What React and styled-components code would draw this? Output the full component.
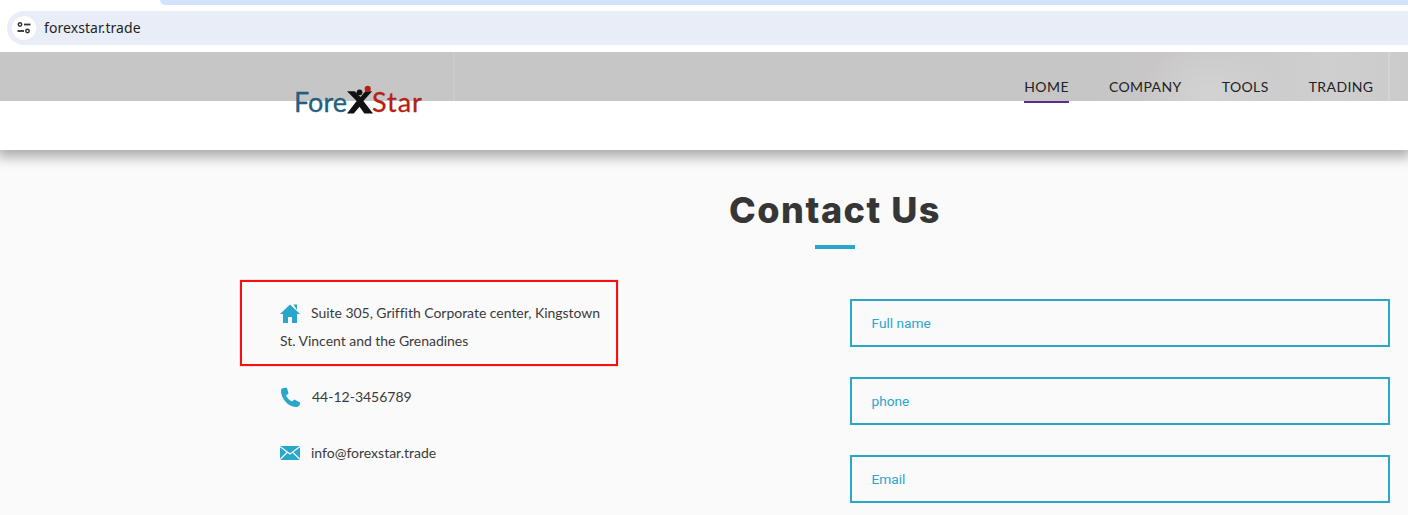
import React from "react";
import styled, { createGlobalStyle } from "styled-components";

const Global = createGlobalStyle`
  html, body { margin: 0; padding: 0; height: 515px; overflow: hidden; background: #fafafa; }
  * { box-sizing: border-box; }
`;
const Page = styled.div`width: 1408px; height: 515px; overflow: hidden; background: #fafafa; font-family: "Lato", sans-serif;`;
const Chrome = styled.div`position: relative; z-index: 1; height: 52px; background: #fff; display: flex; flex-direction: column;`;
const TabStrip = styled.div`height: 5px; margin-left: 160px; background: #d3e3fd; border-bottom-left-radius: 8px;`;
const AddressBar = styled.div`
  height: 34px; margin: 6px 0 0 7px; padding-left: 5px; display: flex; align-items: center; gap: 8px;
  background: #e9edf7; border-radius: 17px 0 0 17px;
`;
const SiteBadge = styled.span`
  width: 24px; height: 24px; border-radius: 50%; background: #fff;
  display: flex; align-items: center; justify-content: center;
`;
const Url = styled.span`font: 14px "Noto Sans", sans-serif; color: #1f1f1f; letter-spacing: .07px; margin-top: -1px;`;

const Header = styled.header`
  position: relative; height: 98px; display: flex; align-items: flex-start; padding: 25px 34.5px 0 295px;
  box-shadow: 0 4px 12px 3px rgba(0,0,0,.32);
  background:
    linear-gradient(#fff, #fff) 0 49px / 100% 49px no-repeat,
    linear-gradient(90deg, transparent 453px, #cbcbcb 453px, #cbcbcb 455px, transparent 455px, transparent 1388px, #d4d4d4 1388px, #d4d4d4 1390px, transparent 1390px),
    radial-gradient(ellipse 70px 50px at 1210px 40px, #d4d3d3, transparent),
    linear-gradient(90deg, #c6c6c6 0, #c6c6c6 1020px, #c8c6c6 1150px, #cfcfcf 1330px, #cbcbcb 1408px);
`;
const Logo = styled.div`
  margin-top: 8px; height: 30px; display: flex; align-items: flex-end;
  font: 400 27px/26px "Lato", sans-serif;
  -webkit-text-stroke: .3px currentColor;
`;
const LogoFore = styled.span`color: #22607f; margin-left: -1px;`;
const LogoStar = styled.span`color: #b51f14; letter-spacing: 1px;`;
const LogoMark = styled.svg`width: 27px; height: 30px; margin-right: -2px; flex: none;`;
const Nav = styled.nav`margin-left: auto; display: flex; gap: 40px;`;
const NavLink = styled.a`
  display: block; height: 26px; padding-bottom: 4px;
  font: 400 14px/20px "Lato", sans-serif; letter-spacing: .4px; color: #222;
  border-bottom: 2px solid ${p => (p.$active ? "#5b2d8e" : "transparent")};
`;

const Main = styled.main`width: 1190px; margin-left: 240px;`;
const Title = styled.h1`
  margin: 0; padding-top: 38px; height: 95px; text-align: center;
  font: 800 36px/44px "Inter", sans-serif; letter-spacing: 1.5px; color: #363636;
`;
const Rule = styled.div`width: 40px; height: 4px; margin: 0 auto; background: #2ba6cb;`;
const Columns = styled.div`display: grid; grid-template-columns: 378px 540px; column-gap: 232px; margin-top: 31px;`;
const Info = styled.div`display: flex; flex-direction: column; font-size: 14px; line-height: 28px; color: #3a3a3a;`;
const Highlight = styled.div`
  border: 2px solid #f80f0f; box-shadow: 0 0 1px rgba(255,0,0,.6);
  padding: 17px 0 9px 38px; margin-bottom: 17px; letter-spacing: -.03px;
`;
const InfoRow = styled.div`padding-left: 40px; margin-bottom: 28px; display: flex; align-items: center;`;
const HouseIcon = styled.svg`width: 20px; height: 20px; vertical-align: -5px; margin-right: 11px;`;
const RowIcon = styled.svg`width: 21px; height: ${p => p.$h}px; margin-right: ${p => p.$gap}px; flex: none;`;
const Form = styled.form`display: flex; flex-direction: column; gap: 30px; margin-top: 19px;`;
const Field = styled.input`
  width: 540px; height: 48px; padding: 0 19.500px; border: 2px solid #2ba6cb; background: transparent; outline: none;
  font: 13.7px "Roboto", sans-serif; color: #2ba6cb;
  &::placeholder { color: #2ba6cb; opacity: 1; }
`;

export default function App() {
  return (
    <Page>
      <Global />
      <Chrome>
        <TabStrip />
        <AddressBar>
          <SiteBadge>
            <svg width="16" height="16" viewBox="0 0 16 16" fill="none" stroke="#333" strokeWidth="1.5">
              <circle cx="4" cy="4.5" r="1.7" />
              <path d="M8 4.5h6.500" strokeWidth="1.8" />
              <circle cx="11.500" cy="11" r="1.7" />
              <path d="M1.500 11H8" strokeWidth="1.8" />
            </svg>
          </SiteBadge>
          <Url>forexstar.trade</Url>
        </AddressBar>
      </Chrome>
      <Header>
        <Logo>
          <LogoFore>Fore</LogoFore>
          <LogoMark viewBox="0 0 28 30">
            <path d="M0 6h8l6 6 5-6h7l-9 10 10 13h-9l-5-7-6 7H0l10-13z" fill="#111" />
            <circle cx="13" cy="7" r="3" fill="#111" />
            <circle cx="21.500" cy="3.500" r="3.200" fill="#b51f14" />
          </LogoMark>
          <LogoStar>Star</LogoStar>
        </Logo>
        <Nav>
          <NavLink $active>HOME</NavLink>
          <NavLink>COMPANY</NavLink>
          <NavLink>TOOLS</NavLink>
          <NavLink>TRADING</NavLink>
        </Nav>
      </Header>
      <Main>
        <Title>Contact Us</Title>
        <Rule />
        <Columns>
          <Info>
            <Highlight>
              <HouseIcon viewBox="0 0 20 20">
                <path d="M10 1.500 20 11h-3v9h-5v-6H8v6H3v-9H0z" fill="#2ba6cb" />
                <path d="M13.500 1.500h3.500v5.500z" fill="#2ba6cb" />
              </HouseIcon>
              Suite 305, Griffith Corporate center, Kingstown
              <br />
              St. Vincent and the Grenadines
            </Highlight>
            <InfoRow>
              <RowIcon $h={20} $gap={11} viewBox="0 0 21 20">
                <path d="M1 3C1.500 1 4.500.4 7 1l1.500 5.500L6 8.500c1 2.500 3.500 5 6 6l2.500-2L20 15.500c.5 2-1 4.500-4 4.500C8 20 .5 11 1 3z" fill="#2ba6cb" />
              </RowIcon>
              44-12-3456789
            </InfoRow>
            <InfoRow>
              <RowIcon $h={14} $gap={10} viewBox="0 0 21 14">
                <rect width="20" height="14" fill="#2ba6cb" />
                <path d="M0 .5 10 8 20 .5M0 13.500l7.500-7.500M20 13.500 12.500 6" fill="none" stroke="#fafafa" strokeWidth="1.100" />
              </RowIcon>
              info@forexstar.trade
            </InfoRow>
          </Info>
          <Form>
            <Field placeholder="Full name" />
            <Field placeholder="phone" />
            <Field placeholder="Email" />
          </Form>
        </Columns>
      </Main>
    </Page>
  );
}
